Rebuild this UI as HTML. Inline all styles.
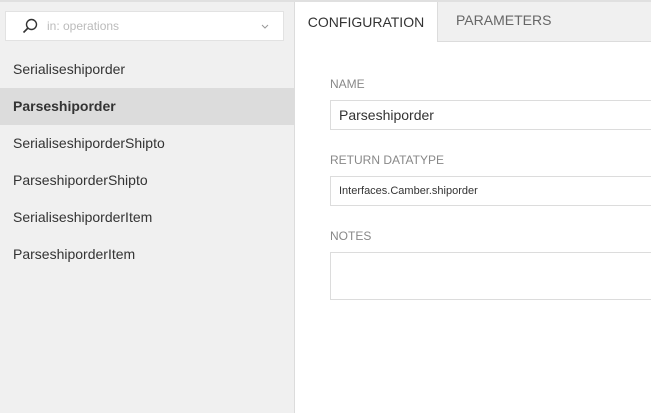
<!DOCTYPE html>
<html><head><style>
*{box-sizing:border-box;margin:0;padding:0}
body{width:651px;height:413px;overflow:hidden;font-family:"Liberation Sans",sans-serif;background:#fff;position:relative}
.topline{position:absolute;left:0;top:0;width:651px;height:2px;background:#e0e0e0}
.left{position:absolute;left:0;top:2px;width:295px;height:411px;background:#f0f0f0;border-right:1px solid #dcdcdc}
.search{position:absolute;left:5px;top:9px;width:279px;height:30px;background:#fff;border:1px solid #e2e2e2}
.search span{position:absolute;left:41px;top:7px;font-size:12px;color:#bbb}
.item{position:absolute;left:0;width:294px;height:37px;font-size:14px;color:#333;padding-left:13px;line-height:37px}
.sel{background:#dcdcdc;font-weight:bold}
.tabbar{position:absolute;left:295px;top:2px;right:0;height:40px;background:#f0f0f0;border-bottom:1px solid #dcdcdc}
.tab1{position:absolute;left:295px;top:2px;width:143px;height:40px;background:#fff;border-right:1px solid #dcdcdc;font-size:14px;color:#333;line-height:40px;text-align:center}
.tab2{position:absolute;left:456px;top:2px;font-size:14px;color:#666;line-height:36px}
.lbl{position:absolute;left:330px;font-size:12px;color:#888}
.inp{position:absolute;left:330px;width:340px;background:#fff;border:1px solid #dcdcdc;padding-left:8px;color:#333}
</style></head><body>
<div class="topline"></div>
<div class="left">
<div class="search"><svg style="position:absolute;left:16px;top:6px" width="16" height="16" viewBox="0 0 16 16"><circle cx="9.5" cy="6.5" r="5" fill="none" stroke="#333" stroke-width="1.4"/><line x1="6" y1="10" x2="1.5" y2="14.5" stroke="#333" stroke-width="1.6"/></svg><span>in: operations</span><svg style="position:absolute;left:255px;top:12px" width="8" height="6" viewBox="0 0 8 6"><path d="M1 1L4 4L7 1" fill="none" stroke="#999" stroke-width="1"/></svg></div>
<div class="item" style="top:49px">Serialiseshiporder</div>
<div class="item sel" style="top:86px">Parseshiporder</div>
<div class="item" style="top:123px">SerialiseshiporderShipto</div>
<div class="item" style="top:160px">ParseshiporderShipto</div>
<div class="item" style="top:197px">SerialiseshiporderItem</div>
<div class="item" style="top:234px">ParseshiporderItem</div>
</div>
<div class="tabbar"></div>
<div class="tab1">CONFIGURATION</div>
<div class="tab2">PARAMETERS</div>
<div class="lbl" style="top:77px">NAME</div>
<div class="inp" style="top:100px;height:30px;line-height:28px;font-size:14px">Parseshiporder</div>
<div class="lbl" style="top:153px">RETURN DATATYPE</div>
<div class="inp" style="top:176px;height:30px;line-height:28px;font-size:11px">Interfaces.Camber.shiporder</div>
<div class="lbl" style="top:229px">NOTES</div>
<div class="inp" style="top:252px;height:48px"></div>
</body></html>
